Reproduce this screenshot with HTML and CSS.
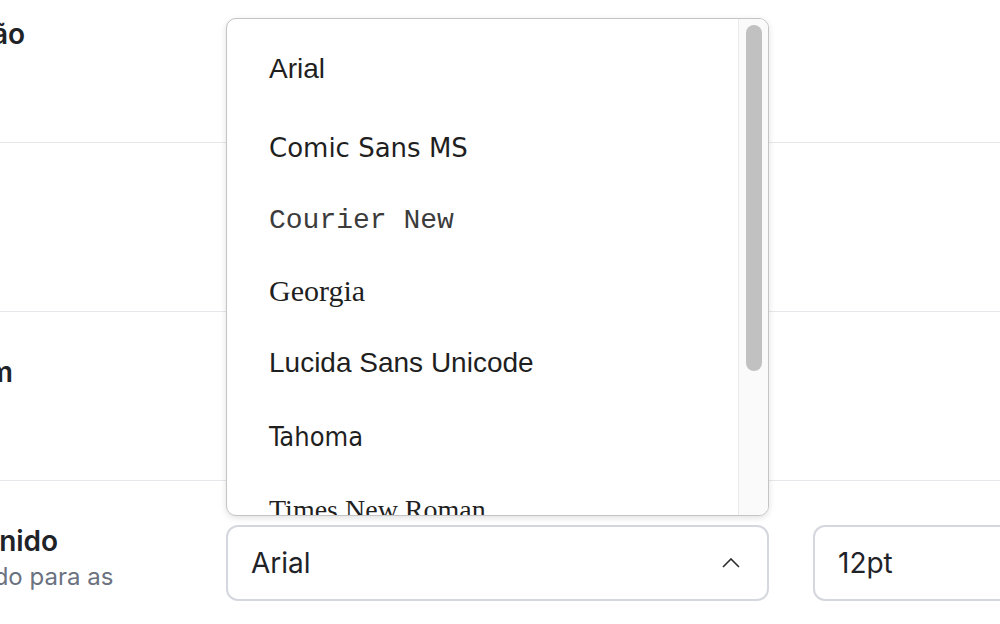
FILE: index.html
```html
<!DOCTYPE html>
<html lang="pt">
    <head>
        <meta charset="utf-8">
        <title>Definições</title>
        <link rel="stylesheet" href="styles.css">
    </head>
    <body>
        <div class="settings">
            <div class="row">
                <div class="label">
                    <div class="title">Painel de visualização</div>
                    <div class="desc">Onde abrir</div>
                </div>
                <div class="controls">
                    <div class="select"><span>Confortável</span>
                        <svg class="chevron" width="18" height="10" viewBox="0 0 18 10"><path d="M1 1 L9 9 L17 1"/></svg>
                    </div>
                </div>
            </div>

            <div class="row">
                <div class="label">
                    <div class="title">Assinatura</div>
                    <div class="desc">Texto no fim</div>
                </div>
                <div class="controls">
                    <div class="select"><span>Nenhuma</span>
                        <svg class="chevron" width="18" height="10" viewBox="0 0 18 10"><path d="M1 1 L9 9 L17 1"/></svg>
                    </div>
                </div>
            </div>

            <div class="row">
                <div class="label">
                    <div class="title">Zoom por mensagem</div>
                    <div class="desc">Tamanho</div>
                </div>
                <div class="controls">
                    <div class="select"><span>100%</span>
                        <svg class="chevron" width="18" height="10" viewBox="0 0 18 10"><path d="M1 1 L9 9 L17 1"/></svg>
                    </div>
                </div>
            </div>

            <div class="row">
                <div class="label">
                    <div class="title">Tipo de letra predefinido</div>
                    <div class="desc">O tipo de letra predefinido para as mensagens novas</div>
                </div>
                <div class="controls">
                    <div class="picker">
                        <div class="menu">
                            <ul class="options">
                                <li class="f-arial">Arial</li>
                                <li class="f-comic">Comic Sans MS</li>
                                <li class="f-courier">Courier New</li>
                                <li class="f-georgia">Georgia</li>
                                <li class="f-lucida">Lucida Sans Unicode</li>
                                <li class="f-tahoma">Tahoma</li>
                                <li class="f-times">Times New Roman</li>
                                <li class="f-trebuchet">Trebuchet MS</li>
                                <li class="f-verdana">Verdana</li>
                            </ul>
                            <div class="scrollbar"><div class="thumb"></div></div>
                        </div>
                        <div class="select open"><span>Arial</span>
                            <svg class="chevron" width="18" height="10" viewBox="0 0 18 10"><path d="M1 9 L9 1 L17 9"/></svg>
                        </div>
                    </div>
                    <div class="size">12pt</div>
                </div>
            </div>
        </div>
    </body>
</html>
```

FILE: styles.css
```css
body{
    margin: 0;
    overflow: hidden;
    background: #fff;
    color: #1f2328;
    font-family: Inter, "Liberation Sans", sans-serif;
}

.settings{
    margin: -26px 0 0 -274px;
    width: 1500px;
}

.row{
    display: grid;
    grid-template-columns: 444px 1fr;
    column-gap: 56px;
    height: 169px;
    box-sizing: border-box;
    border-bottom: 1px solid #e5e7eb;
}

.label{
    padding-top: 42px;
    line-height: 36px;
}

.title{
    font-size: 28px;
    font-weight: 600;
    white-space: nowrap;
}

.desc{
    font-size: 24px;
    color: #6b7280;
}

.controls{
    display: flex;
    align-items: center;
    gap: 44px;
    padding-bottom: 4px;
}

.select, .size{
    height: 76px;
    box-sizing: border-box;
    border: 2px solid #d4d7dd;
    border-radius: 12px;
    background: #fff;
    font-size: 28px;
    display: flex;
    align-items: center;
}

.select{
    width: 543px;
    justify-content: space-between;
    padding: 0 27px 0 23px;
}

.size{
    width: 260px;
    padding-left: 23px;
}

.chevron path{
    fill: none;
    stroke: #2b2b2b;
    stroke-width: 1.6;
}

.picker{
    position: relative;
}

/* open list sits above the field */
.menu{
    position: absolute;
    left: 0;
    bottom: calc(100% + 9px);
    width: 543px;
    height: 498px;
    box-sizing: border-box;
    display: flex;
    border: 1px solid #c4c4c4;
    border-radius: 10px;
    background: #fff;
    overflow: hidden;
    box-shadow: 0 2px 6px rgba(0, 0, 0, 0.12);
    z-index: 2;
}

.options{
    flex: 1;
    list-style: none;
    margin: 0;
    padding: 13px 0 0 42px;
    color: #1f1f1f;
}

.options li{
    height: 73.5px;
    box-sizing: border-box;
    display: flex;
    align-items: center;
    font-size: 28px;
    white-space: nowrap;
}

.f-arial, .f-lucida{ font-family: "Liberation Sans", sans-serif; }
.f-comic{ font-family: "Comic Sans MS", "DejaVu Sans", sans-serif; font-size: 26px !important; padding-top: 12px; }
.f-courier{ font-family: "Liberation Mono", monospace; color: #3c3c3c; padding-top: 10px; }
.f-georgia{ font-family: Georgia, "Liberation Serif", serif; font-size: 30px !important; padding-top: 4px; }
.f-tahoma{ font-family: Tahoma, "DejaVu Sans Condensed", sans-serif; font-size: 27px !important; }
.f-times{ font-family: "Liberation Serif", serif; }
.f-trebuchet{ font-family: "Trebuchet MS", "Open Sans", sans-serif; }
.f-verdana{ font-family: Verdana, "DejaVu Sans", sans-serif; }

.scrollbar{
    width: 30px;
    box-sizing: border-box;
    background: #fafafa;
    border-left: 1px solid #ebebeb;
    padding: 6px 6px 0 7px;
}

.thumb{
    height: 346px;
    background: #c1c1c1;
    border-radius: 8px;
}
```
